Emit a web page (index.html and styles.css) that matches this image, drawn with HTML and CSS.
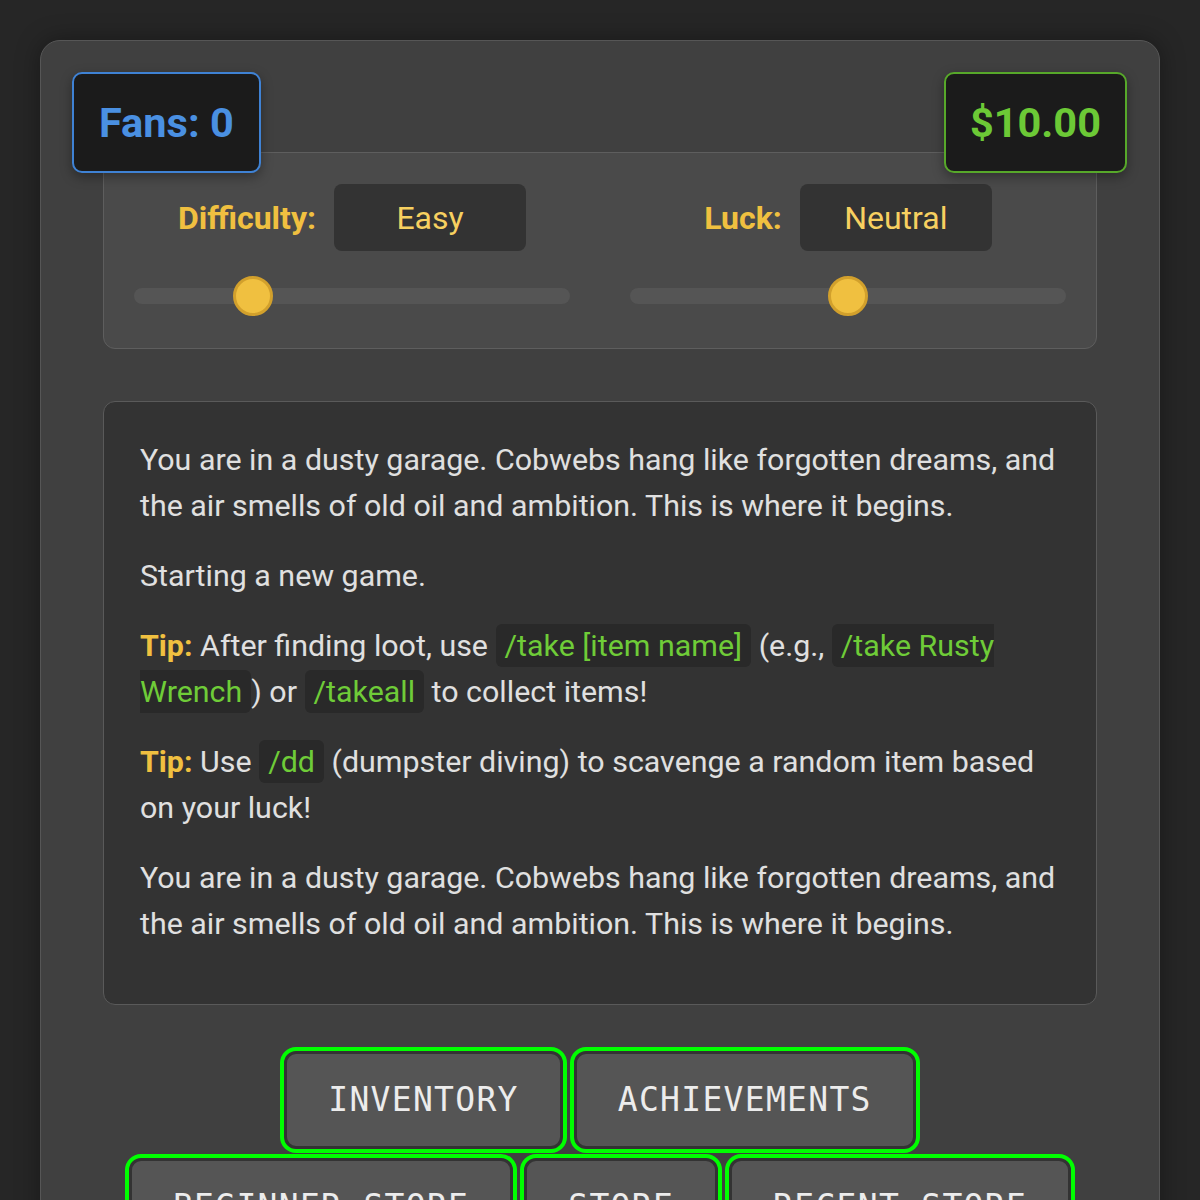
FILE: index.html
```html
<!DOCTYPE html>
<html lang="en">
<head>
<meta charset="utf-8">
<title>Garage Game</title>
<link rel="stylesheet" href="styles.css">
</head>
<body>
<div class="game">
  <div class="badge badge-fans">Fans: 0</div>
  <div class="badge badge-money">$10.00</div>

  <div class="settings">
    <div class="setting">
      <div class="setting-head">
        <span class="setting-label">Difficulty:</span>
        <span class="setting-value">Easy</span>
      </div>
      <input type="range" class="slider" min="0" max="4" value="1">
    </div>
    <div class="setting">
      <div class="setting-head">
        <span class="setting-label">Luck:</span>
        <span class="setting-value">Neutral</span>
      </div>
      <input type="range" class="slider" min="0" max="4" value="2">
    </div>
  </div>

  <div class="log">
    <p>You are in a dusty garage. Cobwebs hang like forgotten dreams, and the air smells of old oil and ambition. This is where it begins.</p>
    <p>Starting a new game.</p>
    <p><strong class="tip">Tip:</strong> After finding loot, use <code class="cmd">/take [item name]</code> (e.g., <code class="cmd">/take Rusty Wrench</code>) or <code class="cmd">/takeall</code> to collect items!</p>
    <p><strong class="tip">Tip:</strong> Use <code class="cmd">/dd</code> (dumpster diving) to scavenge a random item based on your luck!</p>
    <p>You are in a dusty garage. Cobwebs hang like forgotten dreams, and the air smells of old oil and ambition. This is where it begins.</p>
  </div>

  <div class="actions">
    <button class="action">INVENTORY</button>
    <button class="action">ACHIEVEMENTS</button>
    <button class="action">BEGINNER STORE</button>
    <button class="action">STORE</button>
    <button class="action">RECENT STORE</button>
  </div>
</div>
</body>
</html>
```

FILE: styles.css
```css
* { box-sizing: border-box; }

html, body {
  margin: 0;
  background: #262626;
}

body {
  padding: 40px;
  font-family: Roboto, "Liberation Sans", sans-serif;
  color: #e0e0e0;
}

.game {
  position: relative;
  background: #404040;
  border: 1px solid #565656;
  border-radius: 20px;
  padding: 111px 62px 60px;
  box-shadow: 0 0 24px rgba(0, 0, 0, 0.35);
}

.badge {
  position: absolute;
  top: 31px;
  z-index: 2;
  background: #1b1b1b;
  border: 2px solid;
  border-radius: 10px;
  padding: 0 25px;
  height: 101px;
  display: flex;
  align-items: center;
  font-size: 41.5px;
  font-weight: 700;
  box-shadow: 0 4px 12px rgba(0, 0, 0, 0.35);
}

.badge-fans {
  left: 31px;
  color: #4a90e2;
  border-color: #3f82d4;
}

.badge-money {
  right: 32px;
  color: #6cc936;
  border-color: #57a82a;
  padding: 0 24px;
}

.settings {
  display: grid;
  grid-template-columns: 1fr 1fr;
  column-gap: 60px;
  background: #4a4a4a;
  border: 1px solid #5e5e5e;
  border-radius: 12px;
  padding: 31px 30px 32px;
}

.setting {
  display: flex;
  flex-direction: column;
  gap: 25px;
}

.setting-head {
  display: flex;
  justify-content: center;
  align-items: center;
  gap: 18px;
}

.setting-label {
  font-size: 32px;
  font-weight: 700;
  color: #f0c040;
}

.setting-value {
  width: 192px;
  height: 67px;
  display: flex;
  align-items: center;
  justify-content: center;
  background: #333333;
  border-radius: 8px;
  font-size: 32px;
  color: #f7d060;
}

.slider {
  -webkit-appearance: none;
  appearance: none;
  display: block;
  width: 100%;
  height: 40px;
  margin: 0;
  background: transparent;
}

.slider::-webkit-slider-runnable-track {
  height: 16px;
  background: #555555;
  border-radius: 8px;
}

.slider::-webkit-slider-thumb {
  -webkit-appearance: none;
  appearance: none;
  width: 40px;
  height: 40px;
  margin-top: -12px;
  border-radius: 50%;
  background: #f0c040;
  border: 3px solid #d2a02c;
}

.log {
  margin-top: 52px;
  background: #333333;
  border: 1px solid #5a5a5a;
  border-radius: 12px;
  padding: 35px 36px 33px;
  font-size: 30.4px;
  line-height: 46px;
  color: #e0e0e0;
}

.log p {
  margin: 0 0 24px;
}

.tip {
  color: #f0c040;
  font-weight: 700;
}

.cmd {
  font-family: Roboto, "Liberation Sans", sans-serif;
  font-size: 30.4px;
  color: #6fcc38;
  background: #292929;
  border-radius: 6px;
  padding: 4px 9px;
}

.actions {
  margin-top: 46px;
  display: flex;
  flex-wrap: wrap;
  justify-content: center;
  column-gap: 11px;
  row-gap: 9px;
}

.action {
  font-family: "DejaVu Sans Mono", "Liberation Mono", monospace;
  font-size: 33px;
  line-height: 39px;
  letter-spacing: 1.3px;
  color: #ececec;
  background: #555555;
  border: 3px solid #333333;
  border-radius: 12px;
  padding: 26px 41px 27px;
  box-shadow: 0 0 0 4px #00ff00;
  cursor: pointer;
}
```
